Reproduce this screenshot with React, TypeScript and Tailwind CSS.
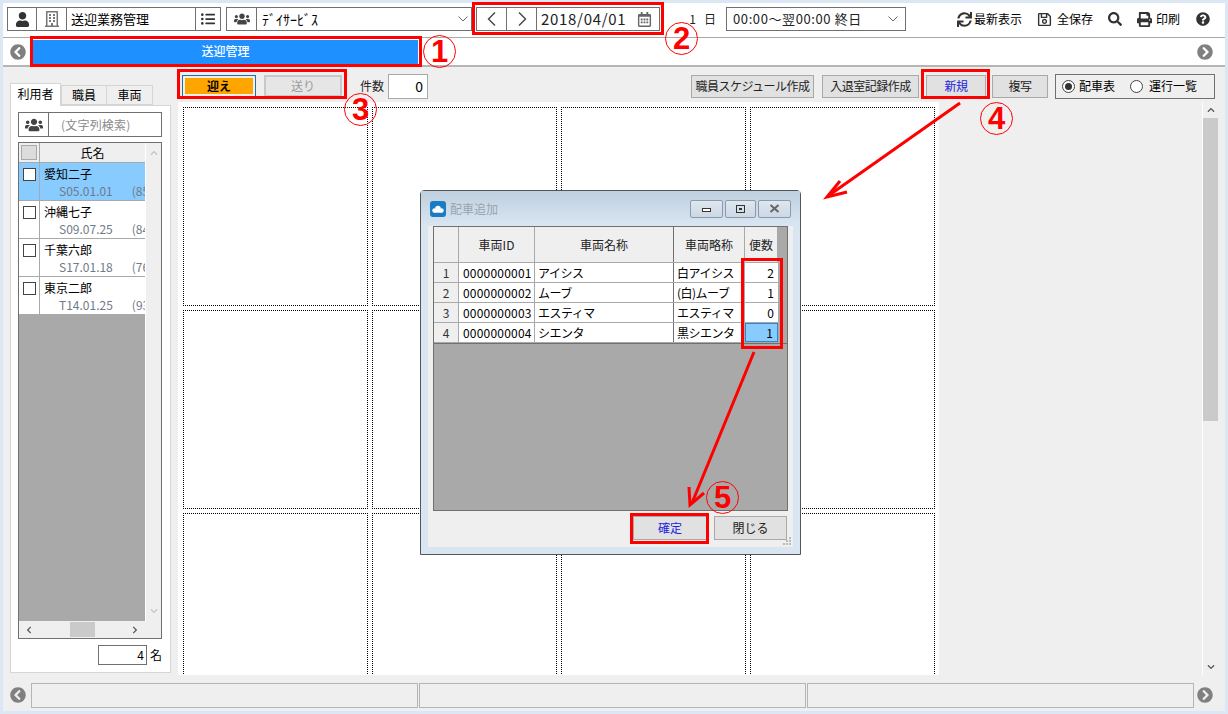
import React from 'react';
import { FaUser, FaRegBuilding, FaListUl, FaUsers, FaRegCalendarAlt, FaSync, FaRegSave, FaSearch, FaPrint, FaQuestionCircle, FaChevronCircleLeft, FaChevronCircleRight, FaChevronLeft, FaChevronRight, FaChevronUp, FaChevronDown } from 'react-icons/fa';

const font = { fontFamily: '"Noto Sans CJK JP", "Noto Sans", sans-serif' };

function Chevron() {
  return <svg width="12" height="8" viewBox="0 0 12 8" className="shrink-0"><path d="M1.5 1.5 L6 6 L10.5 1.5" fill="none" stroke="#666" strokeWidth="1" /></svg>;
}

function NavArrow({ right }: { right?: boolean }) {
  return <svg width="10" height="16" viewBox="0 0 10 16"><path d={right ? 'M2 1.5 L8.5 8 L2 14.5' : 'M8 1.5 L1.5 8 L8 14.5'} fill="none" stroke="#444" strokeWidth="1.4" /></svg>;
}

function IconCell({ children, w }: { children: React.ReactNode; w: string }) {
  return <div className={`${w} h-full flex items-center justify-center border-r border-[#707070] shrink-0`}>{children}</div>;
}

function Row({ name, date, age, selected }: { name: string; date: string; age: string; selected?: boolean }) {
  return (
    <div className={`h-[38px] flex border-b border-[#a9a9a9] ${selected ? 'bg-[#87cbff]' : 'bg-white'}`}>
      <div className="w-[21px] border-r border-[#a9a9a9] pt-[5px] pl-[4px] shrink-0">
        <div className="w-[13px] h-[13px] border border-[#444] bg-white"></div>
      </div>
      <div className="flex-1 overflow-hidden whitespace-nowrap">
        <div className="pl-[4px] text-[12px] leading-[18px] pt-[2px] text-black">{name}</div>
        <div className="pl-[19px] text-[12px] leading-[15px] text-[#707a88] flex gap-[19px]"><span>{date}</span><span>{age}</span></div>
      </div>
    </div>
  );
}

function GridCell() {
  return <div className="border border-dotted border-black bg-white"></div>;
}

function VehicleRow({ n, id, name, short, count, sel }: { n: number; id: string; name: string; short: string; count: number; sel?: boolean }) {
  return (
    <div className="flex h-[20px] border-b border-[#a9a9a9] text-[12px] leading-[19px] text-black bg-white">
      <div className="w-[25px] bg-[#efefef] border-r border-[#a9a9a9] text-center text-[#333]">{n}</div>
      <div className="w-[76px] border-r border-[#a9a9a9] pl-[4px] tracking-[0.2px] whitespace-nowrap overflow-hidden">{id}</div>
      <div className="w-[139px] border-r border-[#707070] pl-[3px] tracking-[-0.5px]">{name}</div>
      <div className="w-[71px] border-r border-[#a9a9a9] pl-[3px] tracking-[-0.5px] whitespace-nowrap overflow-hidden">{short}</div>
      <div className={`w-[33px] text-right pr-[4px] ${sel ? 'bg-[#87cbff] border border-[#3b82c4] leading-[17px]' : ''}`}>{count}</div>
    </div>
  );
}

function Circled({ t, x, y }: { t: string; x: string; y: string }) {
  return <div className={`absolute ${x} ${y} w-[33px] h-[33px] rounded-full border border-[#ff0000] flex items-center justify-center text-[#ff0000] text-[31px] font-bold leading-none`} style={{ fontFamily: '"Liberation Sans", sans-serif' }}>{t}</div>;
}

function RedBox({ c }: { c: string }) {
  return <div className={`absolute border-[3px] border-[#ff0000] pointer-events-none ${c}`}></div>;
}

function Radio({ on }: { on?: boolean }) {
  return <div className="w-[13px] h-[13px] rounded-full border border-[#444] bg-white flex items-center justify-center">{on && <div className="w-[7px] h-[7px] rounded-full bg-[#333]"></div>}</div>;
}

function ActionBtn({ w, children, blue }: { w: string; children: React.ReactNode; blue?: boolean }) {
  return <div className={`${w} h-[23px] border border-[#a9a9a9] bg-[#e1e1e1] flex items-center justify-center text-[12px] tracking-[-0.5px] whitespace-nowrap ${blue ? 'text-[#2222dd]' : 'text-[#222]'}`}>{children}</div>;
}

export default function App() {
  return (
    <div className="relative w-[1228px] h-[714px] overflow-hidden bg-[#dbe7f4] p-[3px]" style={font}>
      <div className="w-[1222px] h-[708px] flex flex-col bg-[#efefef] text-[12px] text-black">
        {/* toolbar */}
        <div className="h-[35px] shrink-0 bg-white border-b border-[#a9a9a9] flex items-center pl-[4px] pb-[2px]">
          <div className="w-[214px] h-[24px] border border-[#707070] flex items-center">
            <IconCell w="w-[29px]"><FaUser size={15} color="#333" /></IconCell>
            <IconCell w="w-[30px]"><FaRegBuilding size={16} color="#777" /></IconCell>
            <div className="flex-1 pl-[4px] text-[13px]">送迎業務管理</div>
            <div className="w-[25px] h-full flex items-center justify-center border-l border-[#707070]"><FaListUl size={14} color="#333" /></div>
          </div>
          <div className="ml-[5px] w-[246px] h-[24px] border border-[#707070] flex items-center">
            <IconCell w="w-[30px]"><FaUsers size={16} color="#444" /></IconCell>
            <div className="flex-1 pl-[5px] text-[14px] leading-none">ﾃﾞｲｻｰﾋﾞｽ</div>
            <div className="pr-[2px]"><Chevron /></div>
          </div>
          <div className="ml-[4px] w-[184px] h-[24px] border border-[#707070] flex items-center">
            <IconCell w="w-[30px]"><NavArrow /></IconCell>
            <IconCell w="w-[30px]"><NavArrow right /></IconCell>
            <div className="pl-[4px] text-[15px] tracking-[0.7px] text-[#222] whitespace-nowrap">2018/04/01</div>
            <div className="ml-[11px]"><FaRegCalendarAlt size={15} color="#666" /></div>
          </div>
          <div className="ml-[22px] w-[14px] text-right text-[12px] text-[#222]">1</div>
          <div className="ml-[8px] w-[12px] text-[12px] text-[#222]">日</div>
          <div className="ml-[10px] w-[180px] h-[24px] border border-[#707070] flex items-center justify-between px-[6px] text-[13px] tracking-[0.6px] text-[#222] whitespace-nowrap">
            <span>00:00～翌00:00 終日</span>
            <Chevron />
          </div>
          <div className="ml-[51px] flex items-center gap-[2px] text-[12px]"><FaSync size={15} color="#333" /><span>最新表示</span></div>
          <div className="ml-[15px] flex items-center gap-[5px] text-[12px]"><FaRegSave size={15} color="#333" /><span>全保存</span></div>
          <div className="ml-[15px]"><FaSearch size={14} color="#333" /></div>
          <div className="ml-[15px] flex items-center gap-[4px] text-[12px]"><FaPrint size={15} color="#333" /><span>印刷</span></div>
          <div className="ml-[16px]"><FaQuestionCircle size={14} color="#333" /></div>
        </div>
        {/* title bar */}
        <div className="h-[29px] shrink-0 bg-white border-b-2 border-[#b5b5b5] flex items-center pl-[7px] pr-[12px]">
          <FaChevronCircleLeft size={16} color="#808080" />
          <div className="ml-[7px] w-[385px] h-[24px] bg-[#1e90ff] text-white text-[12px] font-medium flex items-center justify-center pb-[1px]">送迎管理</div>
          <div className="flex-1"></div>
          <FaChevronCircleRight size={16} color="#808080" />
        </div>
        {/* main */}
        <div className="flex-1 flex min-h-0">
          {/* left */}
          <div className="w-[175px] shrink-0 pl-[7px] pr-[7px] flex flex-col">
            <div className="h-[38px] flex items-end shrink-0 relative z-10">
              <div className="w-[51px] h-[23px] bg-white border border-b-0 border-[#d5d5d5] text-center leading-[19px] -mb-px">利用者</div>
              <div className="w-[46px] h-[20px] bg-[#efefef] border border-[#d5d5d5] text-center leading-[18px]">職員</div>
              <div className="w-[46px] h-[20px] bg-[#efefef] border border-l-0 border-[#d5d5d5] text-center leading-[18px]">車両</div>
            </div>
            <div className="w-[161px] h-[568px] bg-white border border-[#d5d5d5] pl-[7px] pr-[8px] pt-[6px] flex flex-col">
              <div className="h-[25px] border border-[#707070] flex items-center shrink-0">
                <IconCell w="w-[30px]"><FaUsers size={18} color="#444" /></IconCell>
                <div className="pl-[12px] text-[#8a8a8a] text-[12px] tracking-[0.2px] whitespace-nowrap">(文字列検索)</div>
              </div>
              <div className="mt-[5px] h-[497px] border border-[#707070] flex flex-col shrink-0 bg-[#efefef]">
                <div className="flex flex-1 min-h-0">
                  <div className="flex-1 flex flex-col min-w-0 bg-[#a9a9a9]">
                    <div className="h-[20px] flex bg-[#efefef] border-b border-[#a9a9a9] shrink-0">
                      <div className="w-[21px] border-r border-[#a9a9a9] p-[2px]"><div className="w-[16px] h-[15px] bg-[#dcdcdc] border border-[#a9a9a9]"></div></div>
                      <div className="flex-1 text-center leading-[19px]">氏名</div>
                    </div>
                    <Row name="愛知二子" date="S05.01.01" age="(85)" selected />
                    <Row name="沖縄七子" date="S09.07.25" age="(84)" />
                    <Row name="千葉六郎" date="S17.01.18" age="(76)" />
                    <Row name="東京二郎" date="T14.01.25" age="(93)" />
                  </div>
                  <div className="w-[16px] shrink-0 bg-[#efefef] flex flex-col items-center justify-between py-[6px] border-l border-white">
                    <FaChevronUp size={8} color="#c4c4c4" />
                    <FaChevronDown size={8} color="#c4c4c4" />
                  </div>
                </div>
                <div className="h-[17px] shrink-0 bg-[#efefef] flex items-center pl-[6px] pr-[22px] justify-between relative">
                  <FaChevronLeft size={8} color="#555" />
                  <div className="w-[25px] h-[15px] bg-[#cacaca]"></div>
                  <FaChevronRight size={8} color="#555" />
                </div>
              </div>
              <div className="mt-[6px] flex items-center justify-end">
                <div className="w-[49px] h-[20px] border border-[#707070] text-right pr-[2px] text-[12px] leading-[18px]">4</div>
                <div className="ml-[3px] text-[12px]">名</div>
              </div>
            </div>
          </div>
          {/* center */}
          <div className="flex-1 flex flex-col min-w-0 overflow-hidden">
            <div className="h-[35px] shrink-0 flex items-center pl-[4px] pt-[3px]">
              <div className="w-[74px] h-[22px] border border-[#1f6fa8] p-[2px] mr-[8px]"><div className="w-full h-full bg-[#ffa500] flex items-center justify-center font-bold text-[12px] text-black">迎え</div></div>
              <div className="w-[78px] h-[22px] border-2 border-[#c8c8c8] bg-[#e6e6e6] flex items-center justify-center text-[12px] text-[#9a9a9a]">送り</div>
              <div className="ml-[18px] text-[12px] text-[#222]">件数</div>
              <div className="ml-[4px] w-[40px] h-[25px] bg-white border border-[#a9a9a9] text-right pr-[4px] text-[14px] leading-[23px]">0</div>
              <div className="flex-1"></div>
              <ActionBtn w="w-[123px]">職員スケジュール作成</ActionBtn>
              <div className="w-[8px]"></div>
              <ActionBtn w="w-[97px]">入退室記録作成</ActionBtn>
              <div className="w-[7px]"></div>
              <ActionBtn w="w-[60px]" blue>新規</ActionBtn>
              <div className="w-[6px]"></div>
              <ActionBtn w="w-[56px]">複写</ActionBtn>
              <div className="w-[7px]"></div>
              <div className="w-[160px] h-[25px] border border-[#707070] flex items-center pl-[6px] text-[12px] mr-[10px]">
                <Radio on /><span className="ml-[4px]">配車表</span>
                <div className="ml-[15px]"><Radio /></div><span className="ml-[6px]">運行一覧</span>
              </div>
            </div>
            <div className="flex-1 flex min-h-0">
              <div className="w-[761px] shrink-0 bg-white pl-[5px] pt-[5px] overflow-hidden">
                <div className="grid grid-cols-[185px_185px_185px_185px] grid-rows-[199px_199px_199px] gap-[4px]">
                  {Array.from({ length: 12 }).map((_, i) => <GridCell key={i} />)}
                </div>
              </div>
              <div className="flex-1"></div>
              <div className="w-[16px] shrink-0 mr-[7px] flex flex-col items-center border-l border-white">
                <div className="h-[16px] flex items-center"><FaChevronUp size={8} color="#555" /></div>
                <div className="w-full h-[303px] bg-[#cacaca]"></div>
                <div className="flex-1"></div>
                <div className="h-[16px] flex items-center"><FaChevronDown size={8} color="#555" /></div>
              </div>
            </div>
          </div>
        </div>
        {/* footer */}
        <div className="h-[36px] shrink-0 flex items-center pl-[7px] pr-[12px] pt-[4px]">
          <FaChevronCircleLeft size={16} color="#808080" />
          <div className="ml-[5px] flex gap-[1px]">
            <div className="w-[387px] h-[25px] border border-[#b5b5b5]"></div>
            <div className="w-[387px] h-[25px] border border-[#b5b5b5]"></div>
            <div className="w-[387px] h-[25px] border border-[#b5b5b5]"></div>
          </div>
          <div className="flex-1"></div>
          <FaChevronCircleRight size={16} color="#808080" />
        </div>
      </div>

      {/* dialog */}
      <div className="absolute left-[420px] top-[190px] w-[381px] h-[365px] border border-[#555] rounded-t-[4px] bg-[#d9e6f2] flex flex-col">
        <div className="h-[35px] shrink-0 flex items-center pl-[9px] pr-[9px] bg-gradient-to-b from-[#bfcfdf] to-[#d9e6f2]">
          <svg width="16" height="16" viewBox="0 0 16 16"><rect width="16" height="16" rx="3" fill="#1a7cc4" /><circle cx="4.5" cy="9.5" r="2.2" fill="#fff" /><circle cx="8" cy="7.5" r="2.8" fill="#fff" /><circle cx="11.5" cy="9.5" r="2.2" fill="#fff" /><rect x="4.5" y="9" width="7" height="2.7" fill="#fff" /></svg>
          <span className="ml-[4px] text-[12px] text-[#9aa4ae]">配車追加</span>
          <div className="flex-1"></div>
          <div className="flex gap-[2px]">
            {[0, 1, 2].map((i) => (
              <div key={i} className={`${i === 1 ? 'w-[31px]' : 'w-[33px]'} h-[18px] rounded-[2px] border border-[#8a9bb0] bg-gradient-to-b from-[#dfe7ef] to-[#cdd8e3] flex items-center justify-center`}>
                {i === 0 && <div className="w-[9px] h-[4px] border border-[#333] bg-white mt-[3px]"></div>}
                {i === 1 && <div className="w-[9px] h-[8px] border border-[#333] flex items-center justify-center"><div className="w-[3px] h-[2px] bg-[#333]"></div></div>}
                {i === 2 && <svg width="11" height="9" viewBox="0 0 11 9"><path d="M1.5 1 L9.5 8 M9.5 1 L1.5 8" stroke="#666" strokeWidth="2" /></svg>}
              </div>
            ))}
          </div>
        </div>
        <div className="mx-[7px] flex-1 bg-[#efefef] px-[5px] pb-[5px] flex flex-col mb-[7px] relative">
          <div className="h-[285px] bg-[#a9a9a9] border border-[#707070] flex flex-col shrink-0">
            <div className="w-[344px] h-[36px] flex bg-[#efefef] border-b border-[#a9a9a9] text-[12px] text-[#222] shrink-0">
              <div className="w-[25px] border-r border-[#a9a9a9]"></div>
              <div className="w-[76px] border-r border-[#a9a9a9] flex items-center justify-center">車両ID</div>
              <div className="w-[139px] border-r border-[#707070] flex items-center justify-center">車両名称</div>
              <div className="w-[71px] border-r border-[#a9a9a9] flex items-center justify-center">車両略称</div>
              <div className="w-[33px] flex items-center justify-center border-r border-[#a9a9a9]">便数</div>
            </div>
            <div className="w-[344px]">
              <VehicleRow n={1} id="0000000001" name="アイシス" short="白アイシス" count={2} />
              <VehicleRow n={2} id="0000000002" name="ムーブ" short="(白)ムーブ" count={1} />
              <VehicleRow n={3} id="0000000003" name="エスティマ" short="エスティマ" count={0} />
              <VehicleRow n={4} id="0000000004" name="シエンタ" short="黒シエンタ" count={1} sel />
            </div>
            <div className="h-px bg-[#707070] w-full"></div>
          </div>
          <div className="mt-[5px] flex justify-end gap-[7px] pr-[1px]">
            <div className="w-[74px] h-[24px] border border-[#a9a9a9] bg-[#e1e1e1] flex items-center justify-center text-[12px] text-[#2222dd]">確定</div>
            <div className="w-[73px] h-[24px] border border-[#a9a9a9] bg-[#e1e1e1] flex items-center justify-center text-[12px] text-[#222]">閉じる</div>
          </div>
          <svg className="absolute right-[1px] bottom-[1px]" width="9" height="9" viewBox="0 0 9 9"><g fill="#bbb"><rect x="6" y="0" width="2" height="2" /><rect x="3" y="3" width="2" height="2" /><rect x="6" y="3" width="2" height="2" /><rect x="0" y="6" width="2" height="2" /><rect x="3" y="6" width="2" height="2" /><rect x="6" y="6" width="2" height="2" /></g></svg>
        </div>
      </div>

      {/* annotations */}
      <RedBox c="left-[30px] top-[36px] w-[392px] h-[31px]" />
      <RedBox c="left-[472px] top-[2px] w-[192px] h-[33px]" />
      <RedBox c="left-[177px] top-[69px] w-[170px] h-[30px]" />
      <RedBox c="left-[921px] top-[69px] w-[69px] h-[30px]" />
      <RedBox c="left-[741px] top-[258px] w-[42px] h-[91px]" />
      <RedBox c="left-[630px] top-[513px] w-[79px] h-[31px]" />
      <Circled t="1" x="left-[423px]" y="top-[35px]" />
      <Circled t="2" x="left-[665px]" y="top-[22px]" />
      <Circled t="3" x="left-[344px]" y="top-[93px]" />
      <Circled t="4" x="left-[980px]" y="top-[102px]" />
      <Circled t="5" x="left-[706px]" y="top-[481px]" />
      <svg className="absolute left-0 top-0 pointer-events-none" width="1228" height="714" viewBox="0 0 1228 714">
        <g stroke="#ff0000" strokeWidth="3" fill="none">
          <path d="M960 103 L828 196" />
          <path d="M840 181 L827 197 L847 192" />
          <path d="M754 352 L692 503" />
          <path d="M689 487 L690 505 L704 493" />
        </g>
      </svg>
    </div>
  );
}
